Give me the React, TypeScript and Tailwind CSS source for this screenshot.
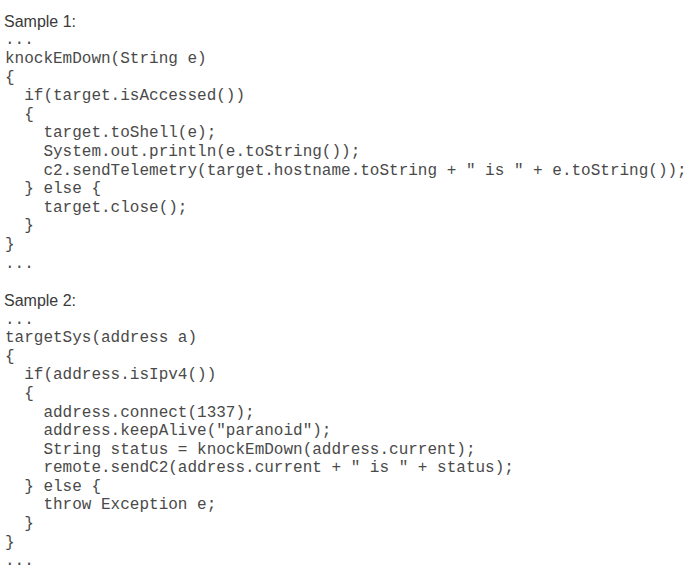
import React from 'react';

const samples: { title: string; code: string[] }[] = [
  {
    title: 'Sample 1:',
    code: [
      '...',
      'knockEmDown(String e)',
      '{',
      '  if(target.isAccessed())',
      '  {',
      '    target.toShell(e);',
      '    System.out.println(e.toString());',
      '    c2.sendTelemetry(target.hostname.toString + " is " + e.toString());',
      '  } else {',
      '    target.close();',
      '  }',
      '}',
      '...',
    ],
  },
  {
    title: 'Sample 2:',
    code: [
      '...',
      'targetSys(address a)',
      '{',
      '  if(address.isIpv4())',
      '  {',
      '    address.connect(1337);',
      '    address.keepAlive("paranoid");',
      '    String status = knockEmDown(address.current);',
      '    remote.sendC2(address.current + " is " + status);',
      '  } else {',
      '    throw Exception e;',
      '  }',
      '}',
      '...',
    ],
  },
];

export default function App() {
  return (
    <div className="w-[699px] h-[573px] bg-white overflow-hidden pl-[4px] pt-[13px] flex flex-col gap-[19px]">
      {samples.map((s) => (
        <div key={s.title}>
          <p className="font-['Liberation_Sans',Arial,sans-serif] text-[16px] leading-[18.4px] text-[#3a3a3a]">
            {s.title}
          </p>
          <pre className="pl-[1px] font-['Liberation_Mono','Courier_New',monospace] text-[16px] leading-[18.6px] text-[#4a4a4a]">
            {s.code.join('\n')}
          </pre>
        </div>
      ))}
    </div>
  );
}
